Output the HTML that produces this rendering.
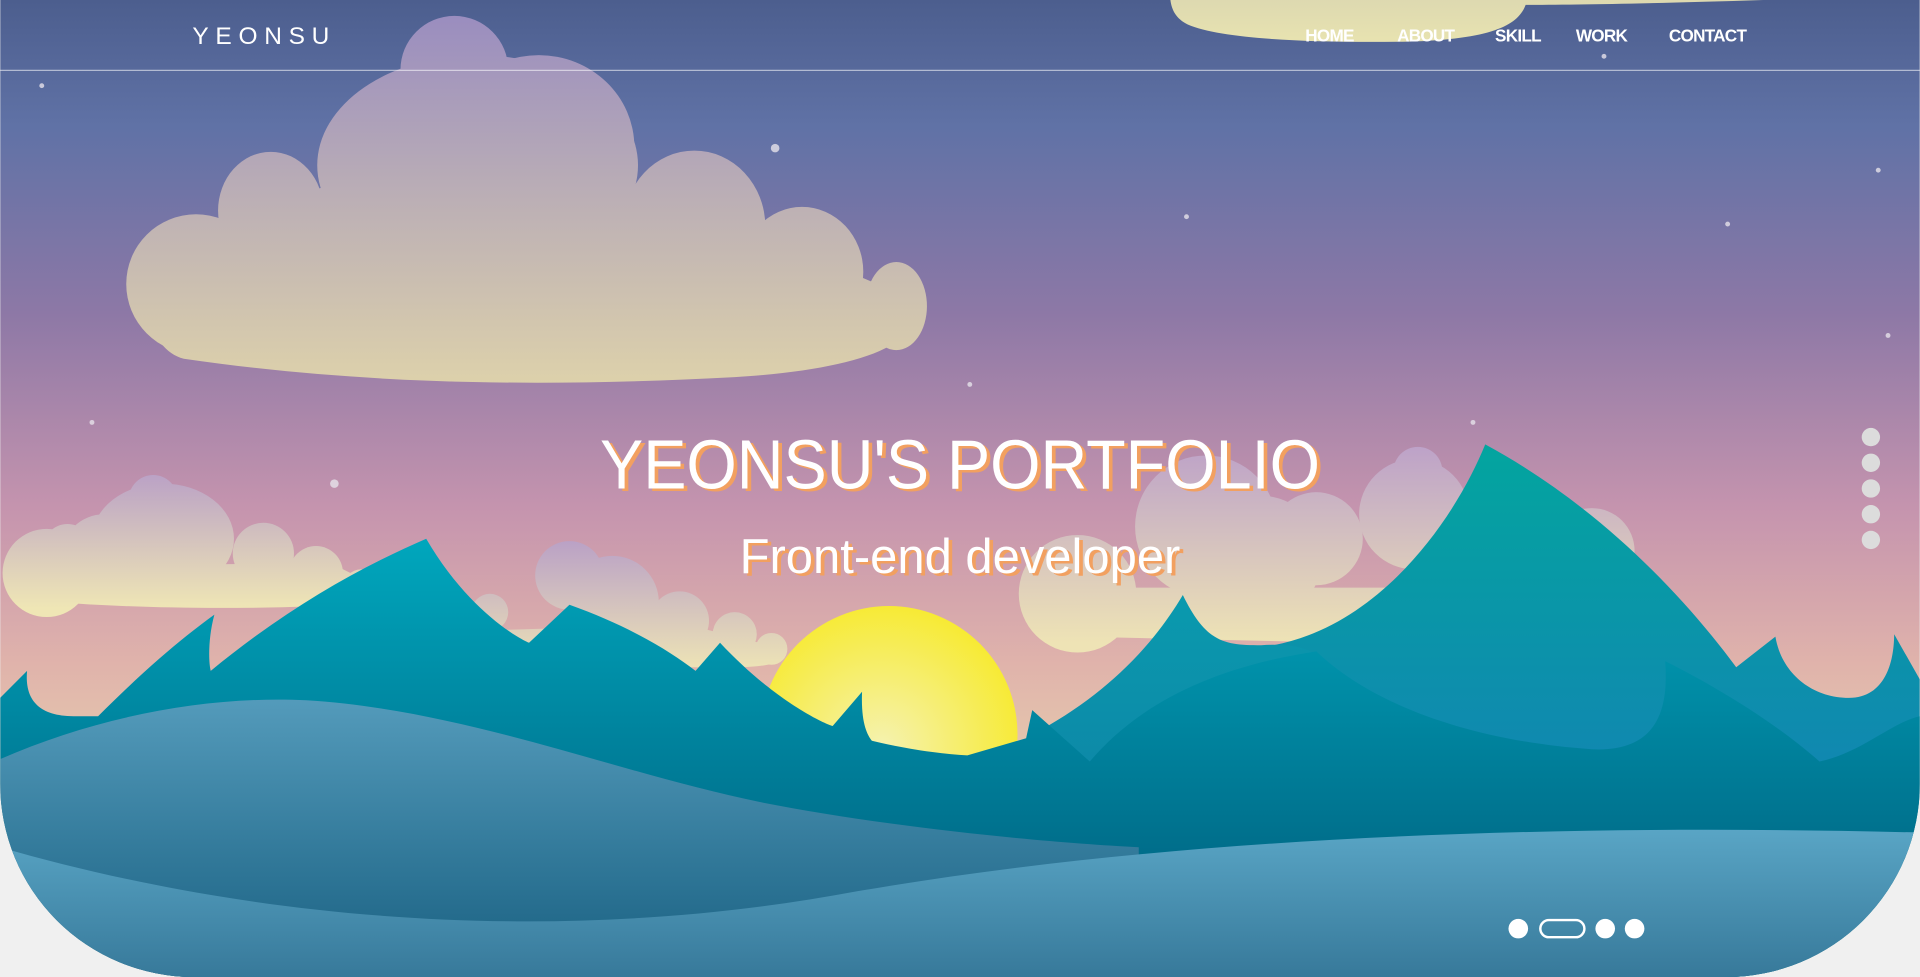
<!DOCTYPE html>
<html><head><meta charset="utf-8"><style>
html,body{margin:0;padding:0;background:#f0f0f0;overflow:hidden}
svg{display:block}
</style></head><body>
<svg width="1920" height="977" viewBox="0 0 1568 798" xmlns="http://www.w3.org/2000/svg">
<defs>
<linearGradient id="sky" x1="0" y1="0" x2="0" y2="1">
<stop offset="0" stop-color="#4c5e8e"/><stop offset="0.13" stop-color="#6072a6"/>
<stop offset="0.32" stop-color="#8d78a6"/><stop offset="0.52" stop-color="#c594ae"/>
<stop offset="0.68" stop-color="#e0b3ab"/><stop offset="0.8" stop-color="#e6cdae"/><stop offset="1" stop-color="#e6cdae"/>
</linearGradient>
<linearGradient id="cl1" gradientUnits="userSpaceOnUse" x1="0" y1="13" x2="0" y2="313"><stop offset="0" stop-color="#9a8dbf"/><stop offset="1" stop-color="#ddd1ab"/></linearGradient>
<linearGradient id="cl2" gradientUnits="userSpaceOnUse" x1="0" y1="385" x2="0" y2="497"><stop offset="0" stop-color="#b9a0c6"/><stop offset="1" stop-color="#efe6b5"/></linearGradient>
<linearGradient id="cl3" gradientUnits="userSpaceOnUse" x1="0" y1="440" x2="0" y2="550"><stop offset="0" stop-color="#b9a0c6"/><stop offset="1" stop-color="#efe6b5"/></linearGradient>
<linearGradient id="cl4" gradientUnits="userSpaceOnUse" x1="0" y1="365" x2="0" y2="525"><stop offset="0" stop-color="#bda2c8"/><stop offset="1" stop-color="#eee3b5"/></linearGradient>
<linearGradient id="cl5" gradientUnits="userSpaceOnUse" x1="0" y1="-30" x2="0" y2="35"><stop offset="0" stop-color="#d4d0b0"/><stop offset="1" stop-color="#e8e3b0"/></linearGradient>
<radialGradient id="sun" cx="720" cy="610" r="120" gradientUnits="userSpaceOnUse"><stop offset="0" stop-color="#f5f2b0"/><stop offset="1" stop-color="#f7ea30"/></radialGradient>
<linearGradient id="mt" gradientUnits="userSpaceOnUse" x1="0" y1="440" x2="0" y2="700"><stop offset="0" stop-color="#00a7bd"/><stop offset="1" stop-color="#006d8a"/></linearGradient>
<linearGradient id="mt2" gradientUnits="userSpaceOnUse" x1="0" y1="363" x2="0" y2="620"><stop offset="0" stop-color="#03a59f"/><stop offset="1" stop-color="#1088b0"/></linearGradient>
<linearGradient id="mt3" gradientUnits="userSpaceOnUse" x1="0" y1="486" x2="0" y2="620"><stop offset="0" stop-color="#0a9aae"/><stop offset="1" stop-color="#0d8aa8"/></linearGradient>
<linearGradient id="h1" gradientUnits="userSpaceOnUse" x1="0" y1="570" x2="0" y2="760"><stop offset="0" stop-color="#549bbb"/><stop offset="1" stop-color="#22698a"/></linearGradient>
<linearGradient id="h2" gradientUnits="userSpaceOnUse" x1="0" y1="675" x2="0" y2="798"><stop offset="0" stop-color="#5aa6c6"/><stop offset="1" stop-color="#37799a"/></linearGradient>
<clipPath id="cp"><path d="M0,0 H1568 V640 A158,158 0 0 1 1410,798 H158 A158,158 0 0 1 0,640 Z"/></clipPath>
</defs>
<rect width="1568" height="798" fill="#f0f0f0"/>
<g clip-path="url(#cp)">
<rect width="1568" height="798" fill="url(#sky)"/>
<g fill="#e6e2ea" opacity="0.8">
<circle cx="34" cy="70" r="2"/><circle cx="633" cy="121" r="3.5"/><circle cx="969" cy="177" r="2"/><circle cx="1310" cy="46" r="2"/>
<circle cx="1411" cy="183" r="2"/><circle cx="1534" cy="139" r="2"/><circle cx="1542" cy="274" r="2"/><circle cx="461" cy="220" r="3.5"/>
<circle cx="792" cy="314" r="2"/><circle cx="75" cy="345" r="2"/><circle cx="273" cy="395" r="3.5"/><circle cx="1203" cy="345" r="2"/>
</g>
<path d="M960,-40 H1440 V0 C1350,3 1280,4 1246,4 C1240,20 1220,32 1150,34 C1080,35 1000,33 970,20 C950,10 955,-10 960,-40Z" fill="url(#cl5)"/>
<g fill="url(#cl1)">
<circle cx="160" cy="232" r="57"/><ellipse cx="221" cy="172" rx="43" ry="48"/><circle cx="371" cy="57" r="44"/>
<ellipse cx="390" cy="135" rx="131" ry="90"/><ellipse cx="440" cy="120" rx="78" ry="75"/>
<ellipse cx="567" cy="185" rx="58" ry="62"/><ellipse cx="655" cy="222" rx="50" ry="53"/><ellipse cx="732" cy="250" rx="25" ry="36"/>
<path d="M160,200 L200,180 L270,150 L510,150 L600,200 L700,225 L735,240 C770,280 700,302 600,308 C450,316 300,315 150,293 C120,285 110,240 160,200Z"/>
</g>
<g fill="url(#cl2)">
<circle cx="38" cy="468" r="36"/><circle cx="55" cy="448" r="20"/><circle cx="125" cy="408" r="20"/><ellipse cx="133" cy="440" rx="58" ry="45"/>
<circle cx="85" cy="455" r="35"/><circle cx="215" cy="452" r="25"/><circle cx="258" cy="468" r="22"/><circle cx="295" cy="480" r="15"/>
<path d="M20,470 L60,462 L270,460 L300,475 V493 C200,499 100,497 22,490 Z"/>
</g>
<g fill="url(#cl3)">
<circle cx="465" cy="470" r="28"/><circle cx="500" cy="492" r="38"/><circle cx="555" cy="507" r="24"/><circle cx="600" cy="518" r="18"/><circle cx="630" cy="530" r="13"/>
<circle cx="400" cy="500" r="15"/><path d="M395,515 L560,510 L620,525 L642,530 C645,540 630,545 600,545 H430 Z"/>
</g>
<g fill="url(#cl4)">
<circle cx="880" cy="485" r="48"/><circle cx="985" cy="430" r="58"/><circle cx="1030" cy="455" r="50"/><circle cx="1075" cy="440" r="38"/>
<circle cx="1158" cy="385" r="20"/><circle cx="1155" cy="420" r="45"/><circle cx="1230" cy="430" r="35"/><circle cx="1300" cy="450" r="35"/><circle cx="1328" cy="460" r="10"/>
<path d="M860,495 L920,480 H1320 V530 L880,520 C860,515 850,505 860,495Z"/>
</g>
<circle cx="726" cy="600" r="105" fill="url(#sun)"/>
<path d="M1040,527 C1130,510 1190,420 1213,363 C1300,410 1370,480 1418,545 L1450,520 C1455,550 1480,570 1510,570 C1540,570 1547,540 1547,518 L1568,555 V798 H1040 Z" fill="url(#mt2)"/>
<path d="M843,600 C900,570 940,530 966,486 C985,525 1000,527 1030,527 C1060,525 1075,532 1080,540 L1080,640 L843,640Z" fill="url(#mt3)"/>
<path d="M0,570 L22,548 C20,570 30,585 60,585 L80,585 C120,545 150,520 175,502 C170,520 170,540 172,548 C230,500 290,465 348,440 C380,495 420,520 432,525 L465,494 C510,510 545,530 568,548 L588,525 C630,570 670,590 680,593 L704,565 C703,590 708,600 712,605 C740,612 770,616 790,617 L838,603 L843,580 L890,622 C930,575 990,545 1075,532 C1120,575 1200,605 1300,612 C1360,615 1362,570 1360,540 C1400,560 1450,590 1486,622 C1520,615 1545,590 1568,585 V798 H0 Z" fill="url(#mt)"/>
<path d="M0,620 C80,585 170,568 250,572 C380,580 500,630 620,655 C720,675 850,688 930,692 L930,798 H0 Z" fill="url(#h1)"/>
<path d="M0,692 C200,750 450,775 700,728 C950,685 1250,672 1568,680 V798 H0 Z" fill="url(#h2)"/>
</g>
<line x1="0" y1="57.5" x2="1568" y2="57.5" stroke="#fff" stroke-opacity="0.55" stroke-width="1"/>
<text x="157" y="36" fill="#fff" font-family="Liberation Sans, sans-serif" font-size="20" letter-spacing="5.5">YEONSU</text>
<g fill="#fff" font-family="Liberation Sans, sans-serif" font-size="14" font-weight="bold" letter-spacing="-0.6">
<text x="1066" y="34">HOME</text><text x="1141" y="34">ABOUT</text><text x="1221" y="34">SKILL</text><text x="1287" y="34">WORK</text><text x="1363" y="34">CONTACT</text>
</g>
<g font-family="Liberation Sans, sans-serif" font-weight="normal">
<text x="493" y="401" font-size="57" fill="#f2a060" textLength="588" lengthAdjust="spacingAndGlyphs">YEONSU'S PORTFOLIO</text>
<text x="490" y="399" font-size="57" fill="#fff" textLength="588" lengthAdjust="spacingAndGlyphs">YEONSU'S PORTFOLIO</text>
<text x="607" y="470" font-size="40" fill="#f2a060" textLength="360" lengthAdjust="spacingAndGlyphs">Front-end developer</text>
<text x="604" y="468" font-size="40" fill="#fff" textLength="360" lengthAdjust="spacingAndGlyphs">Front-end developer</text>
</g>
<g fill="#dcdcdc"><circle cx="1528" cy="357" r="7.5"/><circle cx="1528" cy="378" r="7.5"/><circle cx="1528" cy="399" r="7.5"/><circle cx="1528" cy="420" r="7.5"/><circle cx="1528" cy="441" r="7.5"/></g>
<circle cx="1240" cy="758.5" r="8" fill="#fff"/>
<rect x="1258" y="751.5" width="36" height="14" rx="7" fill="none" stroke="#fff" stroke-width="2"/>
<circle cx="1311" cy="758.5" r="8" fill="#fff"/><circle cx="1335" cy="758.5" r="8" fill="#fff"/>
</svg>
</body></html>
